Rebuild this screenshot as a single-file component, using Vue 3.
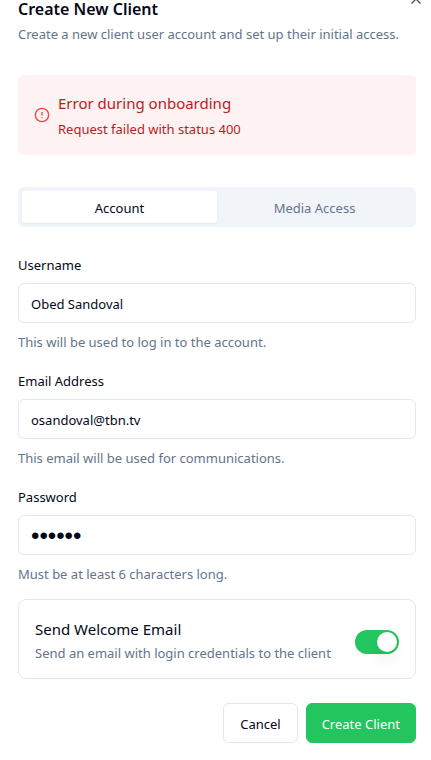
<script setup>
import { ref } from 'vue'

const tab = ref('account')
const username = ref('Obed Sandoval')
const email = ref('osandoval@tbn.tv')
const password = ref('secret')
const sendWelcome = ref(true)
</script>

<template>
  <main class="dialog">
    <header class="head">
      <h1>Create New Client</h1>
      <p class="muted">Create a new client user account and set up their initial access.</p>
      <button class="close" type="button" aria-label="Close">
        <svg viewBox="0 0 24 24"><path d="M18 6 6 18M6 6l12 12" /></svg>
      </button>
    </header>

    <section class="alert" role="alert">
      <svg viewBox="0 0 24 24"><circle cx="12" cy="12" r="10" /><path d="M12 8v4M12 16h.01" /></svg>
      <div>
        <h2>Error during onboarding</h2>
        <p>Request failed with status 400</p>
      </div>
    </section>

    <div class="tabs" role="tablist">
      <button type="button" role="tab" :aria-selected="tab === 'account'" :class="{ active: tab === 'account' }" @click="tab = 'account'">Account</button>
      <button type="button" role="tab" :aria-selected="tab === 'media'" :class="{ active: tab === 'media' }" @click="tab = 'media'">Media Access</button>
    </div>

    <form @submit.prevent>
      <div class="field">
        <label for="username">Username</label>
        <input id="username" v-model="username" type="text" />
        <p class="muted">This will be used to log in to the account.</p>
      </div>
      <div class="field">
        <label for="email">Email Address</label>
        <input id="email" v-model="email" type="email" />
        <p class="muted">This email will be used for communications.</p>
      </div>
      <div class="field">
        <label for="password">Password</label>
        <input id="password" v-model="password" type="password" />
        <p class="muted">Must be at least 6 characters long.</p>
      </div>

      <div class="welcome">
        <div>
          <label for="welcome">Send Welcome Email</label>
          <p class="muted">Send an email with login credentials to the client</p>
        </div>
        <input id="welcome" v-model="sendWelcome" class="switch" type="checkbox" role="switch" />
      </div>

      <footer>
        <button class="btn" type="button">Cancel</button>
        <button class="btn primary" type="submit">Create Client</button>
      </footer>
    </form>
  </main>
</template>

<style>
body {
  background: #fff;
}
</style>

<style scoped>
* {
  box-sizing: border-box;
}
.dialog {
  position: relative;
  padding: 0 15px 16px 18px;
  font-family: "Noto Sans", "Open Sans", sans-serif;
  font-size: 13px;
  line-height: 20px;
  color: #020817;
}
h1, h2, p {
  margin: 0;
}
p {
  line-height: 22px;
}
button, input {
  font: inherit;
  color: inherit;
}
.muted {
  color: #64748b;
}
h1 {
  font-size: 16px;
  line-height: 18px;
  font-weight: 600;
}
.head .muted {
  margin-top: 5px;
}
.close {
  position: absolute;
  top: -9px;
  right: 7px;
  width: 16px;
  height: 16px;
  padding: 0;
  border: 0;
  background: none;
}
svg {
  display: block;
  width: 16px;
  height: 16px;
  fill: none;
  stroke: currentColor;
  stroke-width: 2;
  stroke-linecap: round;
  stroke-linejoin: round;
}
.close svg {
  opacity: 0.7;
}
.alert {
  display: flex;
  align-items: center;
  gap: 8px;
  height: 80px;
  margin-top: 30px;
  padding: 0 16px;
  border-radius: 6px;
  background: #fef2f2;
  color: #b91c1c;
}
.alert svg {
  color: #ef4444;
}
.alert h2 {
  margin-bottom: 2px;
  font-size: 15px;
  line-height: 26px;
  font-weight: 400;
}
.tabs {
  display: grid;
  grid-template-columns: 1fr 1fr;
  height: 40px;
  margin-top: 32px;
  padding: 4px;
  border-radius: 6px;
  background: #f1f5f9;
}
.tabs button {
  padding: 2px 12px 0;
  border: 0;
  border-radius: 3px;
  background: none;
  color: #64748b;
}
.tabs .active {
  background: #fff;
  color: #020817;
  box-shadow: 0 1px 2px rgb(0 0 0 / 6%);
}
form {
  display: grid;
  gap: 14px;
  margin-top: 28px;
}
.field {
  display: grid;
  gap: 8px;
}
.field + .field {
  margin-top: 4px;
}
.field input {
  width: 100%;
  height: 40px;
  padding: 2px 12px 0;
  border: 1px solid #e2e8f0;
  border-radius: 6px;
  background: #fff;
}
.field input[type="password"] {
  font-family: "Liberation Sans", sans-serif;
  font-size: 24px;
}
.welcome {
  display: flex;
  align-items: center;
  justify-content: space-between;
  padding: 16px 16px 14px;
  border: 1px solid #e2e8f0;
  border-radius: 8px;
}
.welcome label {
  display: block;
  font-size: 15px;
  line-height: 26px;
}
.switch {
  appearance: none;
  display: flex;
  flex-shrink: 0;
  width: 44px;
  height: 24px;
  margin: 4px 0 0;
  padding: 2px;
  border-radius: 12px;
  background: #cbd5e1;
}
.switch::before {
  content: "";
  width: 20px;
  height: 20px;
  border-radius: 50%;
  background: #fff;
  box-shadow: 0 10px 15px -3px rgb(0 0 0 / 10%);
}
.switch:checked {
  justify-content: flex-end;
  background: #22c55e;
}
footer {
  display: flex;
  justify-content: flex-end;
  gap: 8px;
  margin-top: 10px;
}
.btn {
  height: 40px;
  padding: 2px 16px 0;
  border: 1px solid #e2e8f0;
  border-radius: 6px;
  background: #fff;
}
.primary {
  padding: 2px 15px 0;
  border-color: #22c55e;
  background: #22c55e;
  color: #fff;
}
</style>
